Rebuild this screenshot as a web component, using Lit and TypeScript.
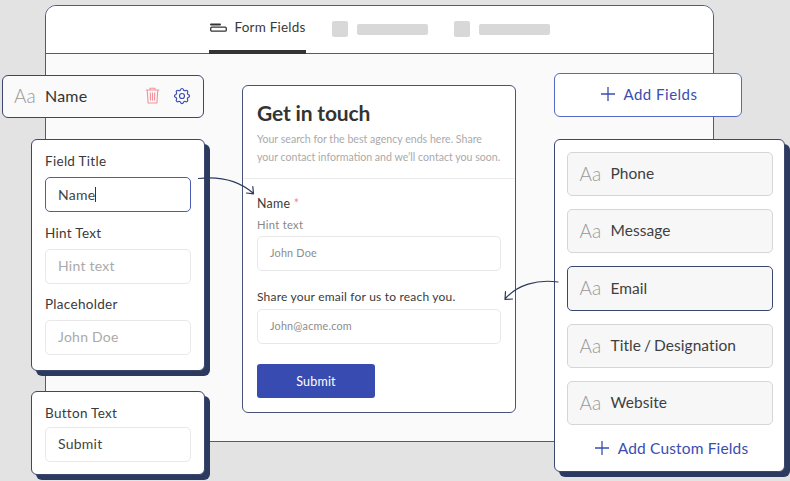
import { LitElement, html, css, svg } from "lit";
import { customElement } from "lit/decorators.js";

const plus = (s: number) => html`<svg class="plus" width=${s} height=${s} viewBox="0 0 14 14" fill="none" stroke="#3a4db0" stroke-width="1.3"><path d="M7 0v14M0 7h14"/></svg>`;

@customElement("app-root")
export class AppRoot extends LitElement {
  static styles = css`
    :host { display: block; width: 790px; height: 481px; }
    * { box-sizing: border-box; }
    .stage { position: relative; width: 790px; height: 481px; overflow: hidden; background: #e3e3e3;
      font-family: "Lato", "Noto Sans", sans-serif; color: #333; }
    .window { position: absolute; left: 45px; top: 5px; width: 669px; height: 437px; background: #fafafa;
      border: 1.5px solid #4f5a7e; border-radius: 11px; overflow: hidden; }
    .tabs { height: 48px; background: #fff; border-bottom: 1.5px solid #4f5a7e; display: flex; padding-left: 162.5px; }
    .tab { width: 97px; height: 48px; display: flex; align-items: center; gap: 8px; padding: 0 0 3px 1px; border-bottom: 4px solid #333; font-size: 13.5px; letter-spacing: .2px; color: #3a3a3a; white-space: nowrap; flex: none; }
    .tab svg { flex: none; }
    .ghost { display: flex; align-items: center; gap: 9px; margin-left: 26px; height: 46px; }
    .sq { width: 16px; height: 16px; border-radius: 2px; background: #d8d8d8; }
    .bar { width: 71px; height: 11px; border-radius: 2px; background: #d8d8d8; }
    .card { position: absolute; background: #fff; border: 1.5px solid #3c4770; border-radius: 6px; }
    .shadow { box-shadow: 5px 5px 0 #2c3a5f; }
    .name { left: 2px; top: 75px; width: 202px; height: 43px; background: #fafafa; display: flex; align-items: center; padding: 0 11px 2px 11px; font-size: 16px; letter-spacing: .2px; }
    .aa { font-weight: 300; color: #999; font-size: 19px; width: 31px; flex: none; letter-spacing: 0; }
    .name .txt { flex: 1; }
    .name svg { flex: none; }
    .name .trash { margin-right: 12px; }
    .panel { left: 31px; width: 174px; padding: 12px 13px 0; display: flex; flex-direction: column; }
    .fields { top: 139px; height: 232px; }
    .btn-text { top: 391px; height: 84px; }
    label { display: block; font-size: 13.5px; line-height: 18px; letter-spacing: .3px; color: #3a3a3a; }
    .input { height: 35px; margin-top: 7px; border: 1.5px solid #e8e8e8; border-radius: 5px; display: flex; align-items: center; padding: 0 12px; font-size: 14px; letter-spacing: .25px; color: #aaa; background: #fff; }
    .group .input { padding-bottom: 2px; }
    .input.val { color: #444; }
    .input.active { border-color: #4b5cb4; }
    .caret { display: inline-block; width: 1px; height: 15px; background: #333; }
    .group { margin-top: 12px; }
    .group.tight { margin-top: 11px; }
    .btn-text .input { margin-top: 5px; padding-bottom: 2px; }
    .form { left: 242px; top: 85px; width: 274px; height: 328px; border-color: #48537a; }
    .fhead { height: 93px; border-bottom: 1px solid #ececec; padding: 13px 14px 0; }
    h1 { margin: 0; font-size: 21px; line-height: 28px; font-weight: 700; letter-spacing: -.15px; color: #333; }
    .fhead p { margin: 3px 0 0; font-size: 10.6px; line-height: 18px; color: #aaa; white-space: nowrap; }
    .fbody { padding: 16px 14px 0; }
    .fbody label { font-size: 12.4px; line-height: 18px; }
    .fbody label.second { font-size: 12px; letter-spacing: .2px; }
    .star { color: #f08a93; }
    .hint { font-size: 11.2px; line-height: 14px; margin-top: 5px; letter-spacing: .3px; color: #888; }
    .fbody .input { height: 35px; font-size: 10.8px; color: #8c8c8c; margin-top: 4px; padding: 0 12px 2px; letter-spacing: .2px; }
    .fbody .second { margin-top: 17px; }
    .fbody .second + .input { margin-top: 3px; }
    .submit { width: 118px; height: 34px; margin-top: 20px; background: #384bb0; border-radius: 3px; color: #fff; font-size: 12.5px; letter-spacing: .2px; display: flex; align-items: center; justify-content: center; }
    .add { left: 554px; top: 73px; width: 188px; height: 44px; border-color: #5668c4; display: flex; align-items: center; justify-content: center; gap: 8px; color: #3a4db0; font-size: 15px; letter-spacing: .5px; padding: 0 0 2px 3px; }
    .list { left: 554px; top: 139px; width: 231px; height: 333px; padding: 12px 11.5px 0; display: flex; flex-direction: column; gap: 13px; }
    .row { height: 44px; background: #f7f7f7; border: 1.5px solid #d6d6d6; border-radius: 5px; display: flex; align-items: center; padding: 0 0 2px 12px; font-size: 15.5px; letter-spacing: .05px; word-spacing: -1px; color: #3f3f3f; }
    .row.on { border-color: #3c4770; height: 45px; }
    .custom { margin-top: 1px; display: flex; align-items: center; justify-content: center; gap: 9px; color: #3a4db0; font-size: 15.5px; letter-spacing: .15px; padding-left: 4px; }
    .arrow { position: absolute; left: 0; top: 0; pointer-events: none; }
  `;

  private aa() { return html`<span class="aa">Aa</span>`; }

  render() {
    return html`<div class="stage">
      <div class="window">
        <div class="tabs">
          <div class="tab">
            <svg width="17" height="10" viewBox="0 0 17 10" fill="none" stroke="#333"><path d="M1 2.500h9" stroke-width="2" stroke-linecap="round"/><rect x=".7" y="5.200" width="15.600" height="4" rx="1.200" stroke-width="1.300"/></svg>
            <span>Form Fields</span>
          </div>
          <div class="ghost"><div class="sq"></div><div class="bar"></div></div>
          <div class="ghost"><div class="sq"></div><div class="bar"></div></div>
        </div>
      </div>

      <div class="card form">
        <div class="fhead">
          <h1>Get in touch</h1>
          <p>Your search for the best agency ends here. Share<br>your contact information and we’ll contact you soon.</p>
        </div>
        <div class="fbody">
          <label>Name <span class="star">*</span></label>
          <div class="hint">Hint text</div>
          <div class="input">John Doe</div>
          <label class="second">Share your email for us to reach you.</label>
          <div class="input">John@acme.com</div>
          <div class="submit">Submit</div>
        </div>
      </div>

      <div class="card name">
        ${this.aa()}<span class="txt">Name</span>
        <svg class="trash" width="15" height="17" viewBox="0 0 15 17" fill="none" stroke="#f4929c" stroke-width="1.1" stroke-linejoin="round"><path d="M.8 3h13.400M5 3V1.200h5V3M2.200 3l.9 13h8.800l.9-13M5.300 5.500l.2 8M7.500 5.500v8M9.700 5.500l-.2 8"/></svg>
        <svg width="20" height="20" viewBox="0 0 24 24" fill="none" stroke="#3a4db0" stroke-width="1.400" stroke-linecap="round" stroke-linejoin="round"><path d="M10.300 4.300c.4-1.800 3-1.800 3.400 0a1.700 1.700 0 0 0 2.600 1.100c1.500-.9 3.300.8 2.400 2.400a1.700 1.700 0 0 0 1 2.500c1.800.4 1.800 3 0 3.400a1.700 1.700 0 0 0-1 2.600c.9 1.500-.9 3.300-2.400 2.400a1.700 1.700 0 0 0-2.600 1c-.4 1.800-3 1.800-3.400 0a1.700 1.700 0 0 0-2.600-1c-1.500.9-3.300-.9-2.400-2.400a1.700 1.700 0 0 0-1-2.600c-1.800-.4-1.800-3 0-3.400a1.700 1.700 0 0 0 1-2.500c-.9-1.600.9-3.300 2.400-2.400a1.700 1.700 0 0 0 2.600-1.100z"/><circle cx="12" cy="12" r="3"/></svg>
      </div>

      <div class="card shadow panel fields">
        <label>Field Title</label>
        <div class="input val active"><span>Name</span><span class="caret"></span></div>
        <div class="group"><label>Hint Text</label><div class="input">Hint text</div></div>
        <div class="group tight"><label>Placeholder</label><div class="input">John Doe</div></div>
      </div>

      <div class="card shadow panel btn-text">
        <label>Button Text</label>
        <div class="input val">Submit</div>
      </div>

      <div class="card add">${plus(14)}<span>Add Fields</span></div>

      <div class="card shadow list">
        <div class="row">${this.aa()}<span>Phone</span></div>
        <div class="row">${this.aa()}<span>Message</span></div>
        <div class="row on">${this.aa()}<span>Email</span></div>
        <div class="row">${this.aa()}<span>Title / Designation</span></div>
        <div class="row">${this.aa()}<span>Website</span></div>
        <div class="custom">${plus(14)}<span>Add Custom Fields</span></div>
      </div>

      <svg class="arrow" width="790" height="481" viewBox="0 0 790 481" fill="none" stroke="#2c3a5f" stroke-width="1.200" stroke-linecap="round" stroke-linejoin="round">
        ${svg`<path d="M198.500 178.500C221 176 239 181 253 193M252.800 186.500L253.500 193.800L246.500 193"/>
        <path d="M558 282C537 279 517 285 505 299M505.500 291.500L505 299.500L512.500 299"/>`}
      </svg>
    </div>`;
  }
}
